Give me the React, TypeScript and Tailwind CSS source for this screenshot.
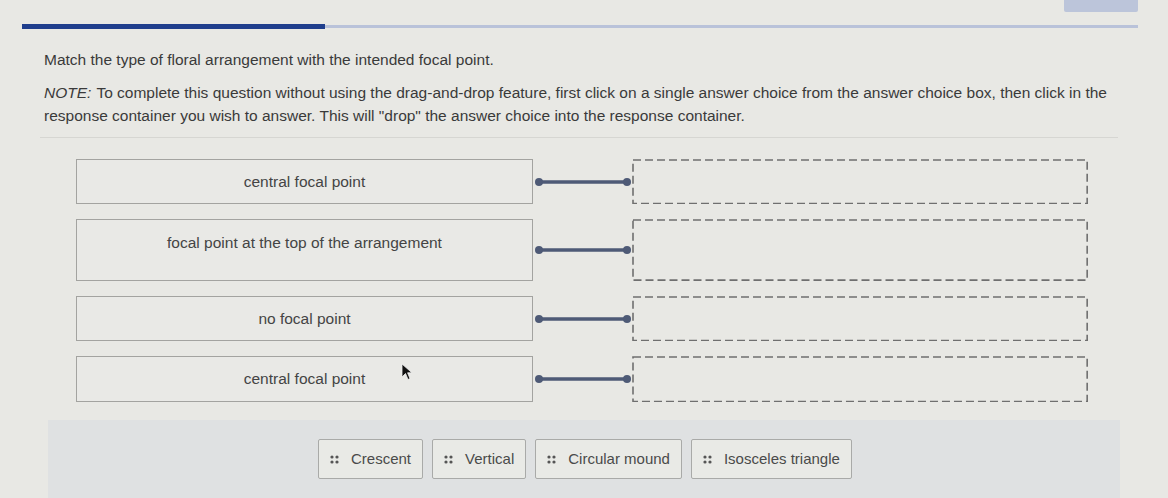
import React from "react";

const prompts = [
  { text: "central focal point", h: "h-[45px]", pad: "" },
  { text: "focal point at the top of the arrangement", h: "h-[62px]", pad: "pb-[15px]" },
  { text: "no focal point", h: "h-[45px]", pad: "" },
  { text: "central focal point", h: "h-[46px]", pad: "", cursor: true },
];

const choices = ["Crescent", "Vertical", "Circular mound", "Isosceles triangle"];

function GripDots() {
  return (
    <svg width="9" height="9" viewBox="0 0 9 9" className="shrink-0">
      <circle cx="2" cy="2" r="1.6" fill="#555" />
      <circle cx="7" cy="2" r="1.6" fill="#555" />
      <circle cx="2" cy="7" r="1.6" fill="#555" />
      <circle cx="7" cy="7" r="1.6" fill="#555" />
    </svg>
  );
}

function Connector() {
  return (
    <svg width="99" height="12" viewBox="0 0 99 12" className="block">
      <line x1="6" y1="6" x2="94" y2="6" stroke="#4e5a76" strokeWidth="3.5" />
      <circle cx="6" cy="6" r="4" fill="#4e5a76" />
      <circle cx="94" cy="6" r="4" fill="#4e5a76" />
    </svg>
  );
}

function DropZone() {
  return (
    <div className="relative h-full w-[456px]">
      <svg className="absolute inset-0 h-full w-full" preserveAspectRatio="none">
        <rect
          x="1"
          y="1"
          width="99.6%"
          height="97%"
          fill="none"
          stroke="#6f6f6f"
          strokeWidth="1.6"
          strokeDasharray="8 4"
        />
      </svg>
    </div>
  );
}

function Cursor() {
  return (
    <svg width="12" height="18" viewBox="0 0 12 18" className="absolute left-[324px] top-[6px]">
      <path d="M1 1 L1 14 L4.5 10.5 L7 16.5 L9 15.6 L6.6 9.8 L11 9.8 Z" fill="#111" stroke="#f0f0f0" strokeWidth="0.8" />
    </svg>
  );
}

export default function App() {
  return (
    <div
      className="relative h-[498px] w-[1168px] overflow-hidden bg-[#e8e8e4] text-[#3a3a3a]"
      style={{ fontFamily: '"Liberation Sans", Arial, sans-serif' }}
    >
      {/* top-right tab */}
      <div className="absolute right-[30px] top-0 h-[12px] w-[74px] rounded-b-[2px] bg-[#bcc5da]" />

      {/* progress */}
      <div className="ml-[22px] mr-[30px] pt-[24px]">
        <div className="flex h-[5px] items-center">
          <div className="h-[5px] w-[303px] bg-[#1f3e8c]" />
          <div className="h-[3px] flex-1 bg-[#b9c2d9]" />
        </div>
      </div>

      {/* question text */}
      <div className="pl-[44px] pr-[40px] pt-[19px] text-[15.5px] leading-[23px]">
        <p>Match the type of floral arrangement with the intended focal point.</p>
        <p className="mt-[10px]">
          <i className="mr-[5px]">NOTE:</i>To complete this question without using the drag-and-drop feature, first
          click on a single answer choice from the answer choice box, then click in the response container you wish to
          answer. This will "drop" the answer choice into the response container.
        </p>
      </div>

      {/* matching area */}
      <div className="ml-[40px] mr-[50px] mt-[10px] border-t border-[#d6d6d2] pl-[36px] pr-[30px] pt-[21px]">
        <div className="flex flex-col gap-[15px]">
          {prompts.map((p, i) => (
            <div key={i} className={`flex items-stretch ${p.h}`}>
              <div
                className={`relative flex w-[457px] items-center justify-center border border-[#a3a3a0] bg-[#e9e9e6] text-[15.5px] text-[#444] ${p.pad}`}
              >
                {p.text}
                {p.cursor && <Cursor />}
              </div>
              <div className="flex w-[99px] items-center">
                <Connector />
              </div>
              <DropZone />
            </div>
          ))}
        </div>
      </div>

      {/* answer choices */}
      <div className="ml-[48px] mr-[48px] mt-[18px] flex h-[100px] justify-start gap-[9px] bg-[#dfe1e2] pl-[270px] pt-[19px]">
        {choices.map((c) => (
          <div
            key={c}
            className="flex h-[40px] items-center gap-[12px] rounded-[2px] border border-[#a9aaa8] bg-[#e9eae6] pl-[11px] pr-[11px] text-[15px] text-[#4a4a4a]"
          >
            <GripDots />
            <span>{c}</span>
          </div>
        ))}
      </div>
    </div>
  );
}
